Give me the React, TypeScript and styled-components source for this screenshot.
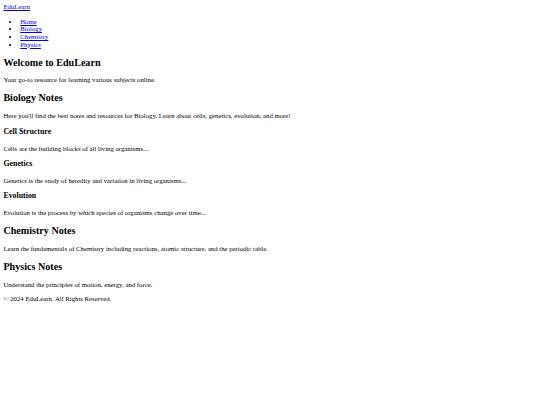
import React from 'react';
import styled, { createGlobalStyle } from 'styled-components';

// The reference is a plain unstyled page shot at 1280 wide and scaled down to 540,
// so every default size is multiplied by 540 / 1280.
const GlobalStyle = createGlobalStyle`
  html {
    font-size: 6.75px;
  }
  body {
    margin: 3.375px;
    font-family: "Liberation Serif", "Times New Roman", serif;
    font-size: 6.75px;
    line-height: 1.13;
    color: #000;
    background: #fff;
  }
`;

const Header = styled.header``;

const Brand = styled.a`
  color: #0000ee;
  text-decoration: underline;
`;

const NavList = styled.ul`
  margin: 1em 0;
  padding-left: 16.875px;
  list-style: disc;
`;

const NavLink = styled.a`
  color: #0000ee;
  text-decoration: underline;
`;

const Title = styled.h2`
  font-size: 1.5em;
  font-weight: bold;
  margin: 0.83em 0;
`;

const SubTitle = styled.h3`
  font-size: 1.17em;
  font-weight: bold;
  margin: 1em 0;
`;

const Text = styled.p`
  margin: 1em 0;
`;

const Section = styled.section``;

const Topic = styled.article``;

const Footer = styled.footer``;

const navItems = ['Home', 'Biology', 'Chemistry', 'Physics'];

const biologyTopics = [
  { title: 'Cell Structure', text: 'Cells are the building blocks of all living organisms...' },
  { title: 'Genetics', text: 'Genetics is the study of heredity and variation in living organisms...' },
  { title: 'Evolution', text: 'Evolution is the process by which species of organisms change over time...' },
];

const App: React.FC = () => {
  return (
    <>
      <GlobalStyle />
      <Header>
        <Brand href="#">EduLearn</Brand>
        <nav>
          <NavList>
            {navItems.map((item) => (
              <li key={item}>
                <NavLink href="#">{item}</NavLink>
              </li>
            ))}
          </NavList>
        </nav>
      </Header>

      <main>
        <Section>
          <Title>Welcome to EduLearn</Title>
          <Text>Your go-to resource for learning various subjects online.</Text>
        </Section>

        <Section>
          <Title>Biology Notes</Title>
          <Text>
            Here you'll find the best notes and resources for Biology. Learn about cells, genetics,
            evolution, and more!
          </Text>
          {biologyTopics.map((topic) => (
            <Topic key={topic.title}>
              <SubTitle>{topic.title}</SubTitle>
              <Text>{topic.text}</Text>
            </Topic>
          ))}
        </Section>

        <Section>
          <Title>Chemistry Notes</Title>
          <Text>
            Learn the fundamentals of Chemistry including reactions, atomic structure, and the
            periodic table.
          </Text>
        </Section>

        <Section>
          <Title>Physics Notes</Title>
          <Text>Understand the principles of motion, energy, and force.</Text>
        </Section>
      </main>

      <Footer>
        <Text>&copy; 2024 EduLearn. All Rights Reserved.</Text>
      </Footer>
    </>
  );
};

export default App;
